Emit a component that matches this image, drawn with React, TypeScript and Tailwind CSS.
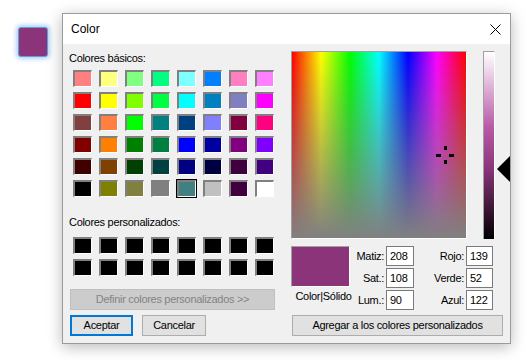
import React from "react"

const BASIC = [
  ["bg-[#ff8080]", "bg-[#ffff80]", "bg-[#80ff80]", "bg-[#00ff80]", "bg-[#80ffff]", "bg-[#0080ff]", "bg-[#ff80c0]", "bg-[#ff80ff]"],
  ["bg-[#ff0000]", "bg-[#ffff00]", "bg-[#80ff00]", "bg-[#00ff40]", "bg-[#00ffff]", "bg-[#0080c0]", "bg-[#8080c0]", "bg-[#ff00ff]"],
  ["bg-[#804040]", "bg-[#ff8040]", "bg-[#00ff00]", "bg-[#008080]", "bg-[#004080]", "bg-[#8080ff]", "bg-[#800040]", "bg-[#ff0080]"],
  ["bg-[#800000]", "bg-[#ff8000]", "bg-[#008000]", "bg-[#008040]", "bg-[#0000ff]", "bg-[#0000a0]", "bg-[#800080]", "bg-[#8000ff]"],
  ["bg-[#400000]", "bg-[#804000]", "bg-[#004000]", "bg-[#004040]", "bg-[#000080]", "bg-[#000040]", "bg-[#400040]", "bg-[#400080]"],
  ["bg-[#000000]", "bg-[#808000]", "bg-[#808040]", "bg-[#808080]", "bg-[#408080]", "bg-[#c0c0c0]", "bg-[#400040]", "bg-[#ffffff]"],
]

function Swatch({ color, selected }: { color: string; selected?: boolean }) {
  return (
    <div
      className={`h-[17px] w-[19px] border-t-2 border-l-2 border-r border-b border-t-[#808080] border-l-[#808080] border-r-white border-b-white ${color} ${
        selected ? "outline outline-1 outline-black" : ""
      }`}
    />
  )
}

function Field({ label, value }: { label: string; value: string }) {
  return (
    <>
      <div className="pr-[2px] text-right leading-[20px] whitespace-nowrap">{label}</div>
      <div className="h-[20px] border border-[#7a7a7a] bg-white pl-[3px] leading-[18px]">{value}</div>
    </>
  )
}

export default function App() {
  return (
    <div className="flex h-[361px] w-[526px] items-start bg-white pt-[13px] font-['Liberation_Sans',Arial,sans-serif] text-[11px] tracking-[-0.3px] text-black">
      {/* swatch that opened the dialog */}
      <div className="ml-[18px] mt-[14px] h-[30px] w-[30px] rounded-[3px] border border-[#5d9fe0] bg-[#8b347a] shadow-[0_0_4px_2px_rgba(110,170,235,0.55)]" />

      {/* dialog */}
      <div className="ml-[14px] flex h-[331px] w-[449px] flex-col border border-[#9b9b9b] bg-[#f0f0f0] shadow-[0_3px_14px_rgba(0,0,0,0.28)]">
        <div className="flex h-[30px] shrink-0 items-center justify-between bg-white pl-[8px] pr-[9px]">
          <span className="text-[12px] tracking-normal">Color</span>
          <svg width="11" height="11" viewBox="0 0 11 11">
            <path d="M0.5 0.5 L10.5 10.5 M10.5 0.5 L0.5 10.5" stroke="#000" strokeWidth="1" />
          </svg>
        </div>

        <div className="flex flex-1">
          {/* left column */}
          <div className="flex w-[228px] flex-col pt-[8px]">
            <div className="ml-[6px] leading-[13px]">Colores básicos:</div>
            <div className="ml-[10px] mt-[5px] grid grid-cols-[repeat(8,19px)] gap-x-[7px] gap-y-[5px]">
              {BASIC.map((row, r) =>
                row.map((c, i) => <Swatch key={`${r}-${i}`} color={c} selected={r === 5 && i === 4} />)
              )}
            </div>

            <div className="ml-[6px] mt-[19px] leading-[13px]">Colores personalizados:</div>
            <div className="ml-[10px] mt-[8px] grid grid-cols-[repeat(8,19px)] gap-x-[7px] gap-y-[5px]">
              {Array.from({ length: 16 }).map((_, i) => (
                <Swatch key={i} color="bg-black" />
              ))}
            </div>

            <div className="ml-[7px] mt-[13px] flex h-[21px] w-[205px] items-center justify-center border border-[#bfbfbf] bg-[#cccccc] text-[#838383]">
              Definir colores personalizados &gt;&gt;
            </div>

            <div className="ml-[7px] mt-[5px] flex gap-[9px]">
              <button className="flex h-[21px] w-[63px] items-center justify-center border-2 border-[#0078d7] bg-[#e1e1e1]">
                Aceptar
              </button>
              <button className="flex h-[21px] w-[64px] items-center justify-center border border-[#adadad] bg-[#e1e1e1]">
                Cancelar
              </button>
            </div>
          </div>

          {/* right column */}
          <div className="flex flex-col pt-[7px]">
            <div className="flex items-start">
              <div className="relative h-[188px] w-[176px] border-t border-l border-r border-b border-t-[#a0a0a0] border-l-[#a0a0a0] border-r-white border-b-white bg-[linear-gradient(to_bottom,rgba(128,128,128,0),#808080),linear-gradient(to_right,#ff0000,#ffff00,#00ff00,#00ffff,#0000ff,#ff00ff,#ff0000)]">
                <svg className="absolute left-[144px] top-[94px]" width="19" height="19" viewBox="0 0 19 19">
                  <rect x="8" y="0" width="3" height="4" fill="#000" />
                  <rect x="8" y="14" width="3" height="4" fill="#000" />
                  <rect x="0" y="8" width="5" height="3" fill="#000" />
                  <rect x="13" y="8" width="5" height="3" fill="#000" />
                </svg>
              </div>
              <div className="relative ml-[16px] h-[188px] w-[12px] border-t border-l border-r border-t-[#a0a0a0] border-l-[#a0a0a0] border-r-white bg-[linear-gradient(to_bottom,#ffffff,#b95aa8_40%,#8b347a_62.5%,#000000)]">
                <svg className="absolute left-[12px] top-[103px]" width="15" height="28" viewBox="0 0 15 28">
                  <path d="M1 14 L14 1 L14 27 Z" fill="#000" />
                </svg>
              </div>
            </div>

            <div className="mt-[7px] flex">
              <div className="flex w-[59px] flex-col items-center">
                <div className="h-[41px] w-[59px] border-t border-l border-r border-b border-t-[#a0a0a0] border-l-[#a0a0a0] border-r-white border-b-white bg-[#8b347a]" />
                <div className="mt-[3px] whitespace-nowrap pl-[6px] leading-[13px]">Color|Sólido</div>
              </div>
              <div className="grid grid-cols-[36px_28px_52px_27px] gap-y-[2px]">
                <Field label="Matiz:" value="208" />
                <Field label="Rojo:" value="139" />
                <Field label="Sat.:" value="108" />
                <Field label="Verde:" value="52" />
                <Field label="Lum.:" value="90" />
                <Field label="Azul:" value="122" />
              </div>
            </div>

            <button className="ml-[1px] mt-[5px] flex h-[21px] w-[211px] items-center justify-center border border-[#adadad] bg-[#e1e1e1]">
              Agregar a los colores personalizados
            </button>
          </div>
        </div>
      </div>
    </div>
  )
}
